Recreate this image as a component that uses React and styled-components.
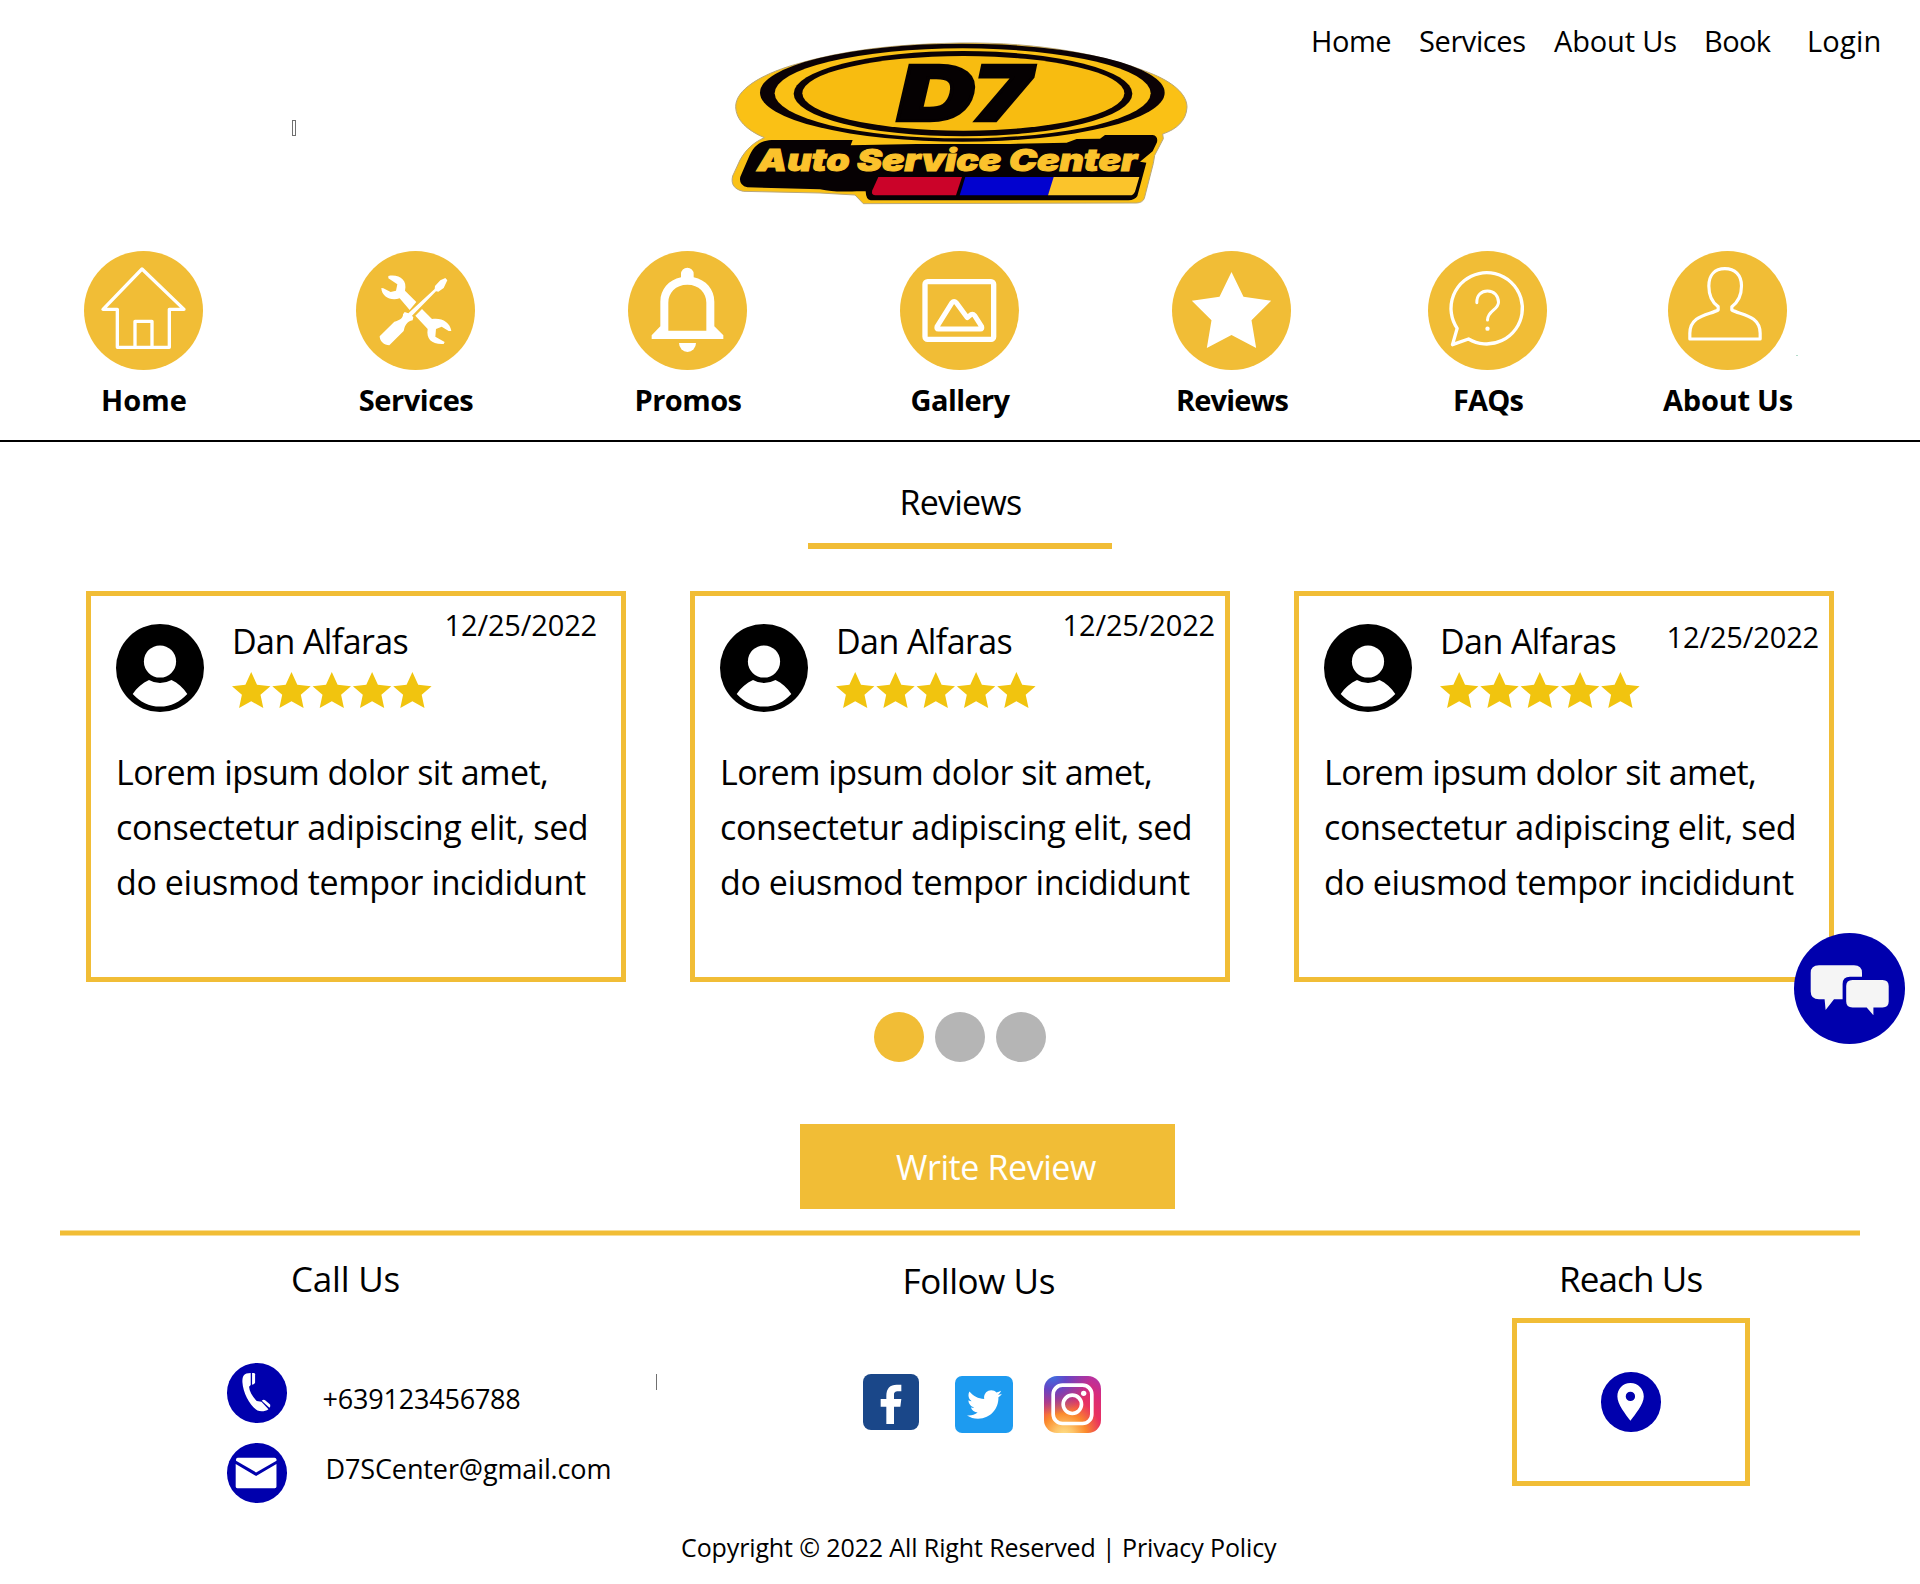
import React from 'react';
import styled, { createGlobalStyle } from 'styled-components';
import { FaTwitter } from 'react-icons/fa';

const GOLD = '#f1bd36';
const BLUE = '#0000ad';

const GlobalStyle = createGlobalStyle`
  * { box-sizing: border-box; }
  body {
    margin: 0;
    background: #fff;
    color: #000;
    font-family: 'Open Sans', 'Noto Sans', sans-serif;
  }
`;

const Page = styled.div`
  width: 1920px;
  height: 1584px;
  display: flex;
  flex-direction: column;
  overflow: hidden;
  background: #fff;
`;

/* ---------- header ---------- */
const Header = styled.header`
  height: 442px;
  border-bottom: 2px solid #000;
`;
const TopRow = styled.div`
  display: grid;
  grid-template-columns: 710px 500px 710px;
  height: 251px;
`;
const Placeholder = styled.span`
  width: 4px;
  height: 16px;
  margin: 120px 0 0 292px;
  border: 1px solid #707070;
`;
const LogoSvg = styled.svg`
  display: block;
  width: 500px;
  height: 200px;
  margin-top: 20px;
`;
const TopNav = styled.nav`
  display: grid;
  grid-template-columns: 108px 135px 150px 103px auto;
  align-content: start;
  padding: 21px 0 0 101px;
`;
const TopLink = styled.a`
  font-size: 29px;
  line-height: 40px;
  white-space: nowrap;
  letter-spacing: ${(p) => p.$ls}px;
`;
const Categories = styled.div`
  display: grid;
  grid-template-columns: repeat(5, 272px) repeat(2, 240px);
  padding-left: 7.5px;
`;
const Category = styled.div`
  position: relative;
  display: flex;
  flex-direction: column;
  align-items: center;
`;
const CategoryDisc = styled.svg`
  width: 119px;
  height: 119px;
  display: block;
  border-radius: 50%;
  background: ${GOLD};
  fill: none;
  stroke: #fff;
  stroke-linejoin: round;
  stroke-linecap: round;
`;
const CategoryLabel = styled.span`
  margin: 10px 0 0 1px;
  font-size: 29px;
  font-weight: 700;
  line-height: 40px;
  letter-spacing: ${(p) => p.$ls}px;
`;
const Speck = styled.i`
  position: absolute;
  left: 188px;
  top: 104px;
  width: 2px;
  height: 1px;
  background: #b5dccb;
`;

/* ---------- reviews ---------- */
const Reviews = styled.main`
  display: flex;
  flex-direction: column;
  align-items: center;
  padding-top: 37px;
`;
const SectionTitle = styled.h1`
  margin: 0 0 0 1px;
  font-size: 34px;
  font-weight: 400;
  line-height: 46px;
  letter-spacing: -0.78px;
`;
const TitleBar = styled.div`
  width: 304px;
  height: 6px;
  margin-top: 18px;
  background: ${GOLD};
`;
const CardRow = styled.div`
  display: flex;
  gap: 64px;
  margin-top: 42px;
`;
const Card = styled.article`
  width: 540px;
  height: 391px;
  border: 5px solid ${GOLD};
`;
const CardHead = styled.div`
  display: flex;
  align-items: flex-start;
  padding: 9px ${(p) => p.$right}px 0 25px;
`;
const Avatar = styled.svg`
  width: 88px;
  height: 88px;
  margin-top: 19px;
  flex: none;
`;
const Author = styled.div`
  margin: 14px 0 0 28px;
`;
const AuthorName = styled.div`
  font-size: 34px;
  line-height: 44px;
  letter-spacing: -0.59px;
  white-space: nowrap;
`;
const Stars = styled.svg`
  display: block;
  width: 200px;
  height: 36px;
  margin-top: 9px;
  fill: #f1c40f;
`;
const ReviewDate = styled.time`
  margin: ${(p) => p.$drop}px 0 0 auto;
  font-size: 29px;
  line-height: 40px;
  letter-spacing: -0.15px;
`;
const ReviewBody = styled.p`
  margin: 33px 0 0 25px;
  font-size: 34px;
  line-height: 55px;
`;
const ReviewLine = styled.span`
  display: block;
  white-space: nowrap;
  letter-spacing: ${(p) => p.$ls}px;
`;
const Dots = styled.div`
  display: flex;
  gap: 11px;
  margin-top: 30px;
`;
const Dot = styled.span`
  width: 50px;
  height: 50px;
  border-radius: 50%;
  background: ${(p) => (p.$active ? GOLD : '#b5b5b5')};
`;
const WriteButton = styled.button`
  align-self: flex-start;
  width: 375px;
  height: 85px;
  margin: 62px 0 0 800px;
  padding: 0 0 0 96px;
  border: 0;
  background: ${GOLD};
  color: #fff;
  font-family: inherit;
  font-size: 34px;
  line-height: 46px;
  letter-spacing: -0.42px;
  text-align: left;
`;
const ChatButton = styled.svg`
  position: absolute;
  left: 1794px;
  top: 933px;
  width: 111px;
  height: 111px;
`;

/* ---------- footer ---------- */
const Divider = styled.div`
  width: 1800px;
  height: 6px;
  margin: 21px auto 0;
  background: ${GOLD};
  border: solid #f8dd97;
  border-width: 1px 0;
`;
const Footer = styled.footer`
  display: grid;
  grid-template-columns: 657px 855px 408px;
  grid-template-rows: 293px auto;
`;
const FooterTitle = styled.h2`
  margin: ${(p) => p.$top}px 0 0 ${(p) => p.$left}px;
  font-size: 35px;
  font-weight: 400;
  line-height: 46px;
  letter-spacing: ${(p) => p.$ls}px;
`;
const Contacts = styled.div`
  display: grid;
  gap: 20px;
  margin: 61px 0 0 227px;
`;
const ContactRow = styled.div`
  display: flex;
  align-items: flex-start;
  height: 60px;
`;
const BlueDisc = styled.svg`
  display: block;
  flex: none;
  width: 59.5px;
  height: 59.5px;
  border-radius: 50%;
  background: ${BLUE};
  fill: #fff;
`;
const ContactText = styled.span`
  margin: ${(p) => p.$top}px 0 0 ${(p) => p.$left}px;
  font-size: 27px;
  line-height: 40px;
  letter-spacing: ${(p) => p.$ls}px;
`;
const Tick = styled.i`
  width: 1px;
  height: 16px;
  margin: 11px 0 0 auto;
  background: #707070;
`;
const Socials = styled.div`
  display: flex;
  margin: 70px 0 0 206px;
`;
const FacebookTile = styled.svg`
  width: 56px;
  height: 56px;
  border-radius: 8px;
  background: #1a4789;
`;
const TwitterTile = styled.span`
  display: flex;
  align-items: center;
  justify-content: center;
  width: 58px;
  height: 57px;
  margin: 2px 0 0 36px;
  border-radius: 7px;
  background: #1d9bf0;
  color: #fff;
  font-size: 35px;
`;
const InstagramTile = styled.svg`
  width: 57px;
  height: 57px;
  margin: 2px 0 0 30.5px;
  border-radius: 13px;
  fill: none;
  stroke: #fff;
  background:
    radial-gradient(circle at 15% 0%, #3f6fe0 0%, rgba(88, 72, 205, 0.9) 18%, rgba(130, 58, 190, 0) 52%),
    radial-gradient(circle at 35% 105%, #fee28a 0%, #fdc468 14%, #fb8a2c 32%, #e9325f 54%, #d92a7a 74%, #a236b8 105%);
`;
const MapBox = styled.div`
  display: flex;
  align-items: center;
  justify-content: center;
  width: 238px;
  height: 168px;
  margin-top: 16px;
  border: 5px solid ${GOLD};
`;
const Copyright = styled.p`
  grid-column: 1 / -1;
  margin: 0;
  padding-left: 681px;
  font-size: 25px;
  line-height: 36px;
  letter-spacing: -0.12px;
`;

const Logo = () => (
  <LogoSvg viewBox="0 0 1500 600" aria-label="D7 Auto Service Center">
    <path
      d="M750 69C990 66 1190 105 1330 163C1400 193 1431 228 1431 262C1429 302 1400 328 1358 342L1360 356L1334 406L1330 430L1303 535Q1298 548 1280 549L460 551L435 525L330 519L100 514C72 508 62 492 68 468L90 420C108 388 130 368 163 353C110 330 78 300 77 260C77 210 150 165 250 135C400 90 560 72 750 69Z"
      fill="#fac115"
      stroke="#b9a77a"
      strokeWidth="3"
    />
    <ellipse cx="757" cy="218" rx="607" ry="147" fill="#0b0205" />
    <ellipse cx="758" cy="220" rx="564" ry="135" fill="#fac115" />
    <ellipse cx="759" cy="221" rx="508" ry="128" fill="#0b0205" />
    <ellipse cx="760" cy="220" rx="483" ry="112" fill="#f8bc10" />
    <path
      d="M185 360H428L422 376L620 372L900 372L1070 368L1100 357L1170 356L1185 345H1328Q1345 348 1341 367L1328 394L1290 425L1309 428L1282 528Q1275 540 1255 541H482Q468 540 467 514C430 512 380 520 330 508L112 502Q85 495 91 470L115 415C130 378 150 362 185 360Z"
      fill="#060103"
    />
    <path d="M505 471H756L738 526H495Q482 525 487 511Z" fill="#cb0329" />
    <path d="M766 471H1035L1014 526H749Z" fill="#0202cf" />
    <path d="M1031 471H1288L1275 515Q1270 526 1260 526H1014Z" fill="#fbc42b" />
    <g fontFamily="Inter, sans-serif" fontWeight="900" fontStyle="italic">
      <g fontSize="232" fill="#050102" stroke="#050102" strokeWidth="8">
        <text x="562" y="303" textLength="232" lengthAdjust="spacingAndGlyphs">D</text>
        <text x="788" y="303" textLength="174" lengthAdjust="spacingAndGlyphs">7</text>
      </g>
      <text x="142" y="454" fontSize="90" textLength="1140" lengthAdjust="spacingAndGlyphs" fill="#fbc22c" stroke="#fbc22c" strokeWidth="3">
        Auto Service Center
      </text>
    </g>
  </LogoSvg>
);

const icons = {
  home: (
    <CategoryDisc viewBox="74 63 357 357" strokeWidth="10">
      <path d="M248 117L131 238H174V352H330V238H374Z" />
      <path d="M227 350V274H278V350" />
    </CategoryDisc>
  ),
  services: (
    <CategoryDisc viewBox="890 63 357 357">
      <g fill="#fff" stroke="none">
        <path d="M987 138C1018 132 1045 148 1037 182L1071 216L1051 240L1021 205C994 214 967 200 966 174L972 175L994 186L1010 182L1014 163L987 145Z" />
        <path d="M1088 237L1118 267C1146 262 1172 276 1176 303L1168 303L1147 290L1130 297L1128 320L1156 336L1153 342C1118 344 1100 328 1105 297L1068 257Z" />
        <path d="M1127 168L1143 151L1158 144L1164 151L1153 174L1137 185L1130 184L1058 257L1062 262L1060 271L1054 272C1040 278 1036 289 1033 303L990 346C974 346 961 333 961 319L1005 275C1020 272 1032 264 1031 253L1036 246L1047 250L1126 177Z" />
      </g>
    </CategoryDisc>
  ),
  promos: (
    <CategoryDisc viewBox="86 63 357 357">
      <g fill="#fff" stroke="none">
        <path
          fillRule="evenodd"
          d="M245 142V132a19 19 0 0 1 38 0V142C320 150 345 178 345 215V289L372 316V327H157V316L183 289V215C183 178 208 150 245 142ZM207 302H321V218C321 188 299 164 264 164S207 188 207 218Z"
        />
        <path d="M239 339H290a25.5 27 0 0 1 -51 0Z" />
      </g>
    </CategoryDisc>
  ),
  gallery: (
    <CategoryDisc viewBox="902 63 357 357" strokeWidth="16">
      <rect x="977" y="155" width="206" height="173" rx="8" />
      <path strokeWidth="15" d="M1058 218L1013 290Q1011 297 1017 297H1143Q1149 297 1147 290L1126 257Q1119 249 1111 257L1104 263L1071 218Q1064 211 1058 218Z" />
    </CategoryDisc>
  ),
  reviews: (
    <CategoryDisc viewBox="-178.5 63 357 357">
      <path fill="#fff" stroke="none" d="M0 126L36 200L119 212L60 271L74 354L0 315L-74 354L-60 271L-119 212L-36 200Z" />
    </CategoryDisc>
  ),
  faqs: (
    <CategoryDisc viewBox="-178.5 63 357 357" strokeWidth="10">
      <path d="M-57 327L-105 344L-91 295A107 107 0 1 1 -57 327Z" />
      <path strokeWidth="9" d="M-32 218C-33 195 -18 183 0 183C20 183 33 197 33 217C33 240 0 242 0 270" />
      <circle cy="296" r="6.5" fill="#fff" stroke="none" />
    </CategoryDisc>
  ),
  about: (
    <CategoryDisc viewBox="-178.5 63 357 357" strokeWidth="9.5">
      <path d="M-28 240V230C-45 218 -56 197 -56 168C-56 135 -38 116 -8 116S42 135 42 168C42 197 29 218 13 230V240C40 255 98 255 98 310V327H-113V310C-113 255 -55 255 -28 240Z" />
    </CategoryDisc>
  ),
};

const categories = [
  ['home', 'Home', 0],
  ['services', 'Services', -0.42],
  ['promos', 'Promos', -0.55],
  ['gallery', 'Gallery', -0.6],
  ['reviews', 'Reviews', -0.88],
  ['faqs', 'FAQs', -0.84],
  ['about', 'About Us', -0.26],
];

const topLinks = [
  ['Home', -0.45],
  ['Services', -0.4],
  ['About Us', -0.16],
  ['Book', -0.6],
  ['Login', 0.21],
];

const reviews = [
  { date: '12/25/2022', right: 24, drop: 0 },
  { date: '12/25/2022', right: 10, drop: 0 },
  { date: '12/25/2022', right: 10, drop: 12 },
];

const lines = [
  ['Lorem ipsum dolor sit amet,', -0.56],
  ['consectetur adipiscing elit, sed', -0.4],
  ['do eiusmod tempor incididunt', -0.42],
];

const ReviewCard = ({ date, right, drop }) => (
  <Card>
    <CardHead $right={right}>
      <Avatar viewBox="0 0 88 88">
        <circle cx="44" cy="44" r="44" />
        <circle cx="44" cy="37.5" r="16.1" fill="#fff" />
        <path fill="#fff" d="M16.7 70C21 63.5 26.5 59 33 56Q38 59 44 59T55.5 56C62 59 67 63.5 71.3 70C64 78 55 82.6 44 82.6S24 78 16.7 70Z" />
      </Avatar>
      <Author>
        <AuthorName>Dan Alfaras</AuthorName>
        <Stars viewBox="0 0 200 36">
          {[0, 1, 2, 3, 4].map((i) => (
            <path
              key={i}
              transform={`translate(${i * 40.3} 0)`}
              d="M19.2 0L25 12.7L38.4 14.3L28.5 22.8L31.3 36L19.2 29.2L7.1 36L9.9 22.8L0 14.3L13.4 12.7Z"
            />
          ))}
        </Stars>
      </Author>
      <ReviewDate $drop={drop}>{date}</ReviewDate>
    </CardHead>
    <ReviewBody>
      {lines.map(([text, ls]) => (
        <ReviewLine key={text} $ls={ls}>
          {text}
        </ReviewLine>
      ))}
    </ReviewBody>
  </Card>
);

export default function App() {
  return (
    <Page>
      <GlobalStyle />
      <Header>
        <TopRow>
          <Placeholder />
          <Logo />
          <TopNav>
            {topLinks.map(([text, ls]) => (
              <TopLink key={text} $ls={ls}>
                {text}
              </TopLink>
            ))}
          </TopNav>
        </TopRow>
        <Categories>
          {categories.map(([id, text, ls]) => (
            <Category key={id}>
              {icons[id]}
              <CategoryLabel $ls={ls}>{text}</CategoryLabel>
              {id === 'about' && <Speck />}
            </Category>
          ))}
        </Categories>
      </Header>

      <Reviews>
        <SectionTitle>Reviews</SectionTitle>
        <TitleBar />
        <CardRow>
          {reviews.map((review, i) => (
            <ReviewCard key={i} {...review} />
          ))}
        </CardRow>
        <Dots>
          <Dot $active />
          <Dot />
          <Dot />
        </Dots>
        <WriteButton>Write Review</WriteButton>
      </Reviews>

      <Divider />
      <Footer>
        <section>
          <FooterTitle $top={20} $left={291} $ls={-0.21}>Call Us</FooterTitle>
          <Contacts>
            <ContactRow>
              <BlueDisc viewBox="81 429 178 178">
                <path d="M152 459C131 459 127 468 127 486C129 520 150 558 172 571C182 575 196 574 205 567L184 545L170 543C158 530 148 515 147 500L152 495Z" />
                <path d="M156 459H162Q165 460 165 463V487Q164 492 156 494Z" />
                <path d="M185 542Q190 537 196 541L210 553Q212 558 208 563Z" />
              </BlueDisc>
              <ContactText $top={15.5} $left={36} $ls={-0.2}>+639123456788</ContactText>
              <Tick />
            </ContactRow>
            <ContactRow>
              <BlueDisc viewBox="81 669 178 178">
                <path d="M108 722V718Q108 713 113 713H223Q229 713 229 718V722L168 757Z" />
                <path d="M107 732L168 768L229 732V799Q229 804 224 804H112Q107 804 107 799Z" />
              </BlueDisc>
              <ContactText $top={5.5} $left={39} $ls={-0.12}>D7SCenter@gmail.com</ContactText>
            </ContactRow>
          </Contacts>
        </section>

        <section>
          <FooterTitle $top={22} $left={245.5} $ls={-0.43}>Follow Us</FooterTitle>
          <Socials>
            <FacebookTile viewBox="69 402 168 168">
              <path fill="#fff" d="M139 552V500H122V477H139V468C139 445 150 434 170 434H184V454H175C165 454 162 458 162 465V477H184L181 500H162V552Z" />
            </FacebookTile>
            <TwitterTile>
              <FaTwitter />
            </TwitterTile>
            <InstagramTile viewBox="611 408 171 171">
              <rect x="638.5" y="435.5" width="116" height="115" rx="28" strokeWidth="11" />
              <circle cx="696" cy="493" r="27.5" strokeWidth="11" />
              <circle cx="730" cy="460" r="8" fill="#fff" stroke="none" />
            </InstagramTile>
          </Socials>
        </section>

        <section>
          <FooterTitle $top={20} $left={47} $ls={-0.88}>Reach Us</FooterTitle>
          <MapBox>
            <BlueDisc viewBox="366 456 178 178">
              <path
                fillRule="evenodd"
                d="M454 489C431 489 415 507 415 529C415 553 440 582 454 602C468 582 494 553 494 529C494 507 477 489 454 489ZM454 515a14 14 0 1 1 0 28a14 14 0 1 1 0 -28Z"
              />
            </BlueDisc>
          </MapBox>
        </section>
        <Copyright>Copyright © 2022 All Right Reserved | Privacy Policy</Copyright>
      </Footer>

      <ChatButton viewBox="0 0 111 111">
        <circle cx="55.5" cy="55.5" r="55.5" fill={BLUE} />
        <g fill="#f5f5f5">
          <path d="M25 32.3H60Q68 32.3 68 40V43.7H56Q48.6 43.7 48.6 51V66.3H40L31.6 77L30.6 66.3H25Q16.7 66.3 16.7 58.5V40Q16.7 32.3 25 32.3Z" />
          <path d="M58.5 47H88.5Q94.7 47 94.7 53V68.5Q94.7 74.4 88.5 74.4H79.4V82.3L72.7 74.4H58.5Q52.2 74.4 52.2 68.5V53Q52.2 47 58.5 47Z" />
        </g>
      </ChatButton>
    </Page>
  );
}
